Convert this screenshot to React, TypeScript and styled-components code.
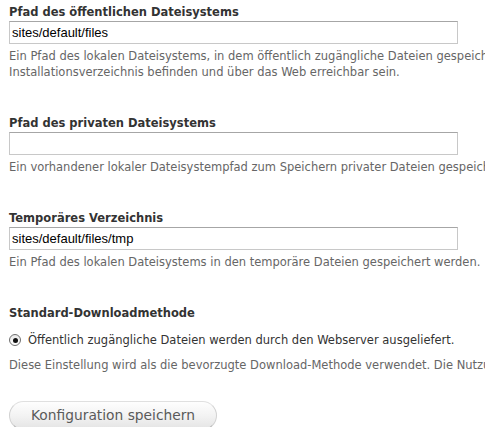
import React from 'react'
import styled, { createGlobalStyle } from 'styled-components'

const GlobalStyle = createGlobalStyle`
  html, body {
    margin: 0;
    padding: 0;
    background: #fff;
    overflow: hidden;
  }
`

const Page = styled.form`
  display: flex;
  flex-direction: column;
  padding: 4px 9px 0;
  font-family: 'DejaVu Sans', Verdana, sans-serif;
  color: #333;
`

const FormItem = styled.div<{ $spacing?: number }>`
  display: flex;
  flex-direction: column;
  align-items: flex-start;
  margin-bottom: ${p => p.$spacing ?? 35}px;
`

const Label = styled.label`
  display: block;
  font-size: 11.5px;
  line-height: 16px;
  font-weight: bold;
  color: #333;
  margin-bottom: 1px;
  white-space: nowrap;
`

const TextInput = styled.input`
  box-sizing: border-box;
  width: 449px;
  height: 23px;
  margin: 0;
  padding: 0 2px;
  border: 1px solid #c8c8c8;
  border-top-color: #a6a6a6;
  border-radius: 0;
  background: #fff;
  font-family: 'Liberation Sans', Arial, sans-serif;
  font-size: 13px;
  color: #000;
  outline: none;
`

const Description = styled.div<{ $offset?: number }>`
  margin-top: ${p => p.$offset ?? 4}px;
  font-size: 11.5px;
  line-height: 16px;
  color: #666;
  white-space: nowrap;
`

const RadioRow = styled.label`
  display: flex;
  align-items: center;
  gap: 7px;
  margin-top: 10px;
  font-size: 11.5px;
  line-height: 16px;
  color: #333;
  white-space: nowrap;
`

const RadioMark = styled.span<{ $checked?: boolean }>`
  position: relative;
  box-sizing: border-box;
  width: 12px;
  height: 12px;
  border-radius: 50%;
  border: 1px solid #6f6f6f;
  background: linear-gradient(#e9e9e9, #fff);
  flex-shrink: 0;

  &::after {
    content: '';
    display: ${p => (p.$checked ? 'block' : 'none')};
    position: absolute;
    left: 2.5px;
    top: 2.5px;
    width: 5px;
    height: 5px;
    border-radius: 50%;
    background: #111;
  }
`

const Actions = styled.div`
  display: flex;
  margin-top: 28px;
`

const Button = styled.button`
  box-sizing: border-box;
  height: 29px;
  padding: 5px 21px;
  border: 1px solid #e0e0e0;
  border-bottom-color: #b4b4b4;
  border-left-color: #d2d2d2;
  border-right-color: #d2d2d2;
  border-radius: 20px;
  background: linear-gradient(#fefefe, #f3f3f3 50%, #e4e4e4);
  font-family: 'DejaVu Sans', Verdana, sans-serif;
  font-size: 13.8px;
  line-height: 17px;
  color: #5a5a5a;
  cursor: pointer;
`

export default function App() {
  return (
    <>
      <GlobalStyle />
      <Page onSubmit={e => e.preventDefault()}>
        <FormItem>
          <Label>Pfad des öffentlichen Dateisystems</Label>
          <TextInput defaultValue="sites/default/files" />
          <Description>
            Ein Pfad des lokalen Dateisystems, in dem öffentlich zugängliche Dateien gespeichert werden. Dieses Verzeichnis muss sich relativ zum Drupal-
            <br />
            Installationsverzeichnis befinden und über das Web erreichbar sein.
          </Description>
        </FormItem>

        <FormItem>
          <Label>Pfad des privaten Dateisystems</Label>
          <TextInput defaultValue="" />
          <Description>
            Ein vorhandener lokaler Dateisystempfad zum Speichern privater Dateien gespeichert werden. Es sollte beschreibbar für Drupal und nicht über das Web erreichbar sein.
          </Description>
        </FormItem>

        <FormItem>
          <Label>Temporäres Verzeichnis</Label>
          <TextInput defaultValue="sites/default/files/tmp" />
          <Description>
            Ein Pfad des lokalen Dateisystems in den temporäre Dateien gespeichert werden.
          </Description>
        </FormItem>

        <FormItem $spacing={0}>
          <Label>Standard-Downloadmethode</Label>
          <RadioRow>
            <RadioMark $checked />
            Öffentlich zugängliche Dateien werden durch den Webserver ausgeliefert.
          </RadioRow>
          <Description $offset={9}>
            Diese Einstellung wird als die bevorzugte Download-Methode verwendet. Die Nutzung privater Dateien ist langsamer.
          </Description>
        </FormItem>

        <Actions>
          <Button type="submit">Konfiguration speichern</Button>
        </Actions>
      </Page>
    </>
  )
}
